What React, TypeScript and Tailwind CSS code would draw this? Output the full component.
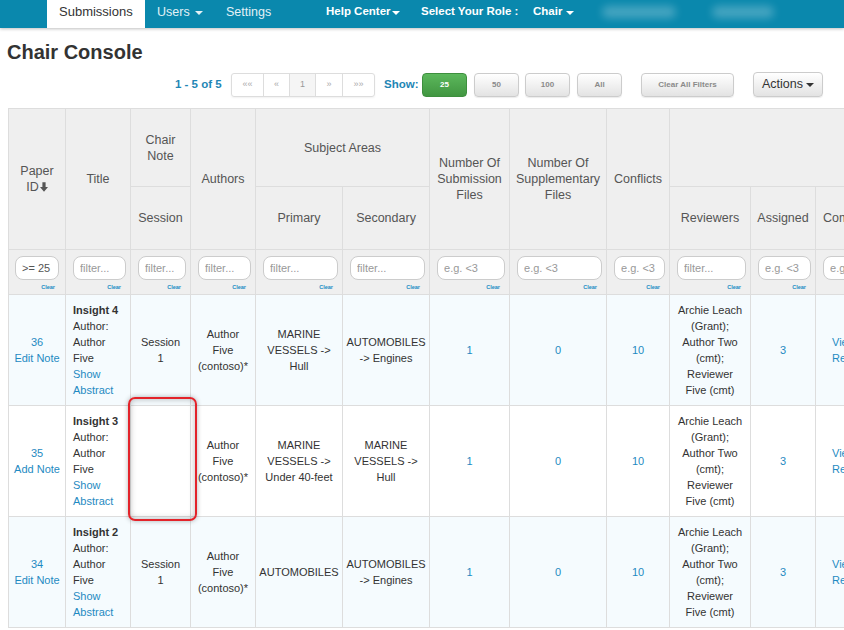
import React from 'react';

const link = 'text-[#1f8ac2]';

type Row = {
  id: string;
  note: string;
  title: string;
  session: string;
  primary: string;
  secondary: string;
  bg: string;
};

const rows: Row[] = [
  { id: '36', note: 'Edit Note', title: 'Insight 4', session: 'Session 1', primary: 'MARINE VESSELS -> Hull', secondary: 'AUTOMOBILES -> Engines', bg: 'bg-[#f5fbfe]' },
  { id: '35', note: 'Add Note', title: 'Insight 3', session: '', primary: 'MARINE VESSELS -> Under 40-feet', secondary: 'MARINE VESSELS -> Hull', bg: 'bg-white' },
  { id: '34', note: 'Edit Note', title: 'Insight 2', session: 'Session 1', primary: 'AUTOMOBILES', secondary: 'AUTOMOBILES -> Engines', bg: 'bg-[#f5fbfe]' },
];

const filters: { ph?: string; value?: string; pad?: string; clearPad?: string }[] = [
  { value: '>= 25', pad: 'pl-[6px] pr-[6px]', clearPad: 'pr-[4px]' },
  { ph: 'filter...' },
  { ph: 'filter...' },
  { ph: 'filter...' },
  { ph: 'filter...' },
  { ph: 'filter...' },
  { ph: 'e.g. <3' },
  { ph: 'e.g. <3' },
  { ph: 'e.g. <3' },
  { ph: 'filter...' },
  { ph: 'e.g. <3' },
  { ph: 'e.g. <3', pad: 'pl-[7px] pr-[60px]' },
];

const colWidths = [57, 65, 60, 65, 87, 87, 80, 97, 63, 81, 65, 120];

function Caret({ className = '' }: { className?: string }) {
  return (
    <span className={`inline-block h-0 w-0 border-x-[4px] border-t-[4px] border-x-transparent border-t-current ${className}`} />
  );
}

const th = 'border border-[#dddddd] bg-[#efefef] px-[5px] text-center align-middle text-[12.5px] font-normal leading-[16px] text-[#555]';
const td = 'border border-[#dddddd] px-[7px] py-[7px] text-center align-middle text-[11px] leading-[16px]';

function GrayButton({ label, w }: { label: string; w: string }) {
  return (
    <button className={`mt-[1px] h-[24px] ${w} rounded-[4px] border border-[#cccccc] bg-linear-to-b from-white to-[#e3e3e3] text-[8px] font-bold text-[#8a8a8a] shadow-[0_1px_1px_rgba(0,0,0,0.08)]`}>
      {label}
    </button>
  );
}

export default function App() {
  return (
    <div className="relative h-[630px] w-[844px] overflow-hidden bg-white font-['Liberation_Sans',Arial,sans-serif] text-[#333]">
      {/* Navbar */}
      <nav className="relative z-10 flex h-[28px] bg-[#0a88ad] shadow-[0_1px_3px_rgba(0,0,0,0.25)]">
        <div className="w-[47px]" />
        <a className="flex h-full w-[98px] items-center bg-white pb-[4px] pl-[12px] text-[13px] text-[#333]">Submissions</a>
        <a className="flex h-full w-[69px] items-center pb-[4px] pl-[12px] text-[12.5px] text-[#e3f1f6]">
          Users
          <Caret className="ml-[5px] mt-[1px]" />
        </a>
        <a className="flex h-full w-[112px] items-center pb-[4px] pl-[12px] text-[12.5px] text-[#e3f1f6]">Settings</a>
        <a className="flex h-full w-[95px] items-center pb-[4px] text-[11.5px] font-bold text-white">
          Help Center
          <Caret className="ml-[1px] mt-[1px]" />
        </a>
        <span className="flex h-full w-[112px] items-center pb-[4px] text-[11.5px] font-bold text-white">Select Your Role :</span>
        <a className="flex h-full w-[69px] items-center pb-[4px] text-[11.5px] font-bold text-white">
          Chair
          <Caret className="ml-[4px] mt-[1px]" />
        </a>
        <div className="flex h-full items-center pb-[4px]">
          <span className="h-[12px] w-[74px] rounded-full bg-white/25 blur-[4px]" />
          <span className="ml-[36px] h-[12px] w-[62px] rounded-full bg-white/25 blur-[4px]" />
        </div>
      </nav>

      <h1 className="ml-[7px] mt-[13px] text-[20px] font-bold leading-[22px] text-[#333]">Chair Console</h1>

      {/* Toolbar */}
      <div className="mt-[9px] flex h-[25px] items-start pl-[175px]">
        <span className="mt-[1px] flex h-[24px] w-[56px] items-center whitespace-nowrap text-[11.5px] font-bold text-[#1f86b5]">1 - 5 of 5</span>
        <div className="mt-[1px] flex h-[24px] overflow-hidden rounded-[3px] border border-[#dddddd] text-[9px] text-[#aaa] shadow-[0_1px_2px_rgba(0,0,0,0.06)]">
          <span className="flex w-[32px] items-center justify-center border-r border-[#dddddd]">««</span>
          <span className="flex w-[26px] items-center justify-center border-r border-[#dddddd]">«</span>
          <span className="flex w-[26px] items-center justify-center border-r border-[#dddddd] bg-[#f5f5f5] text-[#999]">1</span>
          <span className="flex w-[27px] items-center justify-center border-r border-[#dddddd]">»</span>
          <span className="flex w-[31px] items-center justify-center">»»</span>
        </div>
        <span className="ml-[9px] mt-[1px] flex h-[24px] w-[38px] items-center text-[11.5px] font-bold text-[#1f86b5]">Show:</span>
        <button className="mt-[1px] h-[24px] w-[45px] rounded-[4px] border border-[#3e8f3e] bg-linear-to-b from-[#5cb85c] to-[#419641] text-[8px] font-bold text-white">
          25
        </button>
        <div className="w-[7px]" />
        <GrayButton label="50" w="w-[45px]" />
        <div className="w-[6px]" />
        <GrayButton label="100" w="w-[45px]" />
        <div className="w-[7px]" />
        <GrayButton label="All" w="w-[45px]" />
        <div className="w-[19px]" />
        <GrayButton label="Clear All Filters" w="w-[93px]" />
        <div className="w-[19px]" />
        <button className="flex h-[25px] w-[70px] items-center justify-center rounded-[4px] border border-[#cccccc] bg-linear-to-b from-white to-[#e3e3e3] text-[12.5px] text-[#333] shadow-[0_1px_1px_rgba(0,0,0,0.08)]">
          Actions
          <Caret className="ml-[3px] mt-[1px]" />
        </button>
      </div>

      {/* Table */}
      <div className="mt-[11px] pl-[8px]">
        <table className="table-fixed border-collapse" style={{ width: colWidths.reduce((a, b) => a + b, 0) }}>
          <colgroup>
            {colWidths.map((w, i) => (
              <col key={i} style={{ width: w }} />
            ))}
          </colgroup>
          <thead>
            <tr className="h-[78px]">
              <th rowSpan={2} className={th}>
                Paper{' '}
                <span className="whitespace-nowrap">
                  ID
                  <svg viewBox="0 0 10 12" className="ml-[1px] inline-block h-[10px] w-[8px] align-[-1px]" fill="#555">
                    <path d="M3 0h4v6h3l-5 6-5-6h3z" />
                  </svg>
                </span>
              </th>
              <th rowSpan={2} className={th}>Title</th>
              <th className={th}>Chair Note</th>
              <th rowSpan={2} className={th}>Authors</th>
              <th colSpan={2} className={th}>Subject Areas</th>
              <th rowSpan={2} className={th}>Number Of Submission Files</th>
              <th rowSpan={2} className={th}>Number Of Supplementary Files</th>
              <th rowSpan={2} className={th}>Conflicts</th>
              <th colSpan={3} className={th} />
            </tr>
            <tr className="h-[63px]">
              <th className={th}>Session</th>
              <th className={th}>Primary</th>
              <th className={th}>Secondary</th>
              <th className={th}>Reviewers</th>
              <th className={th}>Assigned</th>
              <th className={`${th} !pl-[7px] !text-left`}>Completed</th>
            </tr>
            <tr className="h-[45px]">
              {filters.map((f, i) => (
                <td key={i} className={`border border-[#dddddd] bg-[#efefef] pb-[2px] pt-[6px] align-top ${f.pad ?? 'pl-[7px] pr-[4px]'}`}>
                  <input
                    readOnly
                    defaultValue={f.value}
                    placeholder={f.ph}
                    className="block h-[24px] w-full rounded-[8px] border border-[#cccccc] bg-white px-[6px] text-[11px] text-[#555] outline-none placeholder:text-[#999]"
                  />
                  <div className={`mt-[3px] text-right text-[5.5px] font-bold leading-[8px] text-[#1a8bc4] ${f.clearPad ?? 'pr-[5px]'}`}>
                    Clear
                  </div>
                </td>
              ))}
            </tr>
          </thead>
          <tbody>
            {rows.map((r) => (
              <tr key={r.id} className={`h-[111px] ${r.bg}`}>
                <td className={`${td} !px-[3px]`}>
                  <div className={link}>{r.id}</div>
                  <div className={link}>{r.note}</div>
                </td>
                <td className={`${td} !text-left`}>
                  <div className="font-bold">{r.title}</div>
                  <div>Author: Author Five</div>
                  <div className={link}>Show Abstract</div>
                </td>
                <td className={td}>{r.session}</td>
                <td className={`${td} !px-[6px]`}>Author Five (contoso)*</td>
                <td className={`${td} !px-[3px]`}>{r.primary}</td>
                <td className={`${td} !px-[3px]`}>{r.secondary}</td>
                <td className={`${td} ${link}`}>1</td>
                <td className={`${td} ${link}`}>0</td>
                <td className={`${td} ${link}`}>10</td>
                <td className={td}>Archie Leach (Grant); Author Two (cmt); Reviewer Five (cmt)</td>
                <td className={`${td} ${link}`}>3</td>
                <td className={`${td} !pl-[16px] !text-left ${link}`}>
                  <div>View</div>
                  <div>Reviews</div>
                </td>
              </tr>
            ))}
          </tbody>
        </table>
      </div>

      {/* Highlight annotation */}
      <div className="absolute left-[128px] top-[397px] h-[124px] w-[69px] rounded-[7px] border-2 border-[#e3232a] shadow-[0_0_5px_rgba(0,0,0,0.3),inset_0_0_6px_rgba(0,0,0,0.28)]" />
    </div>
  );
}
